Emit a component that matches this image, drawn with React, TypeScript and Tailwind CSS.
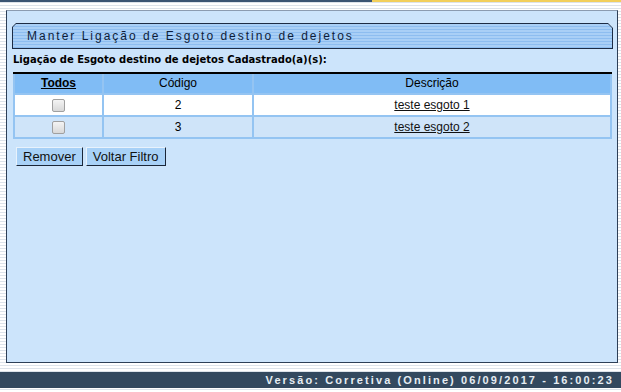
import React from "react";

const rows = [
  { code: "2", desc: "teste esgoto 1", bg: "bg-white" },
  { code: "3", desc: "teste esgoto 2", bg: "bg-[#cfe4f9]" },
];

export default function App() {
  return (
    <div className="w-[621px] h-[392px] flex flex-col bg-[repeating-linear-gradient(to_bottom,#ffffff_0px,#ffffff_2px,#dde3ea_2px,#dde3ea_3px)] overflow-hidden">
      <div className="flex h-[2px] shrink-0">
        <div className="w-[372px] bg-[#3b5573]" />
        <div className="flex-1 bg-[#f2cf5b]" />
      </div>
      <div className="mt-[8px] ml-[6px] mr-[3px] h-[353px] shrink-0 border border-[#2d3f57] border-t-[#8b9bb0] bg-[#cce4fb] pt-[12px] pl-[5px] pr-[4px]">
        {/* Title bar */}
        <div className="h-[26px] bg-[#1d2c44] [clip-path:polygon(4px_0,calc(100%-5px)_0,100%_5px,100%_100%,0_100%,0_4px)] p-[1px]">
          <div className="h-full bg-[repeating-linear-gradient(to_bottom,#a9cff6_0px,#a9cff6_2px,#8dbdf0_2px,#8dbdf0_3px)] [clip-path:polygon(3px_0,calc(100%-4px)_0,100%_4px,100%_100%,0_100%,0_3px)] flex items-center pl-[14px]">
            <span className="text-[12px] tracking-[2px] text-[#0e1d3a] font-['Liberation_Sans',Arial,sans-serif] leading-none">
              Manter Ligação de Esgoto destino de dejetos
            </span>
          </div>
        </div>
        <div className="mt-[4px] text-[10px] font-bold text-[#000] font-['DejaVu_Sans',Verdana,sans-serif] leading-[14px] pl-[1px]">
          Ligação de Esgoto destino de dejetos Cadastrado(a)(s):
        </div>
        <div className="mt-[5px] ml-[1px] mr-[1px] border-t-2 border-black">
          <table className="w-full border-collapse font-['Liberation_Sans',Arial,sans-serif] text-[12px] text-black">
            <thead>
              <tr className="bg-[#80bcf5]">
                <th className="w-[89px] p-0 font-bold border-x-2 border-[#94c4f2] leading-[19px]">
                  <span className="underline">Todos</span>
                </th>
                <th className="w-[150px] p-0 font-normal border-x-2 border-[#94c4f2] leading-[19px]">Código</th>
                <th className="p-0 font-normal border-x-2 border-[#94c4f2] leading-[19px]">Descrição</th>
              </tr>
            </thead>
            <tbody>
              {rows.map((r) => (
                <tr key={r.code} className={`${r.bg} h-[22px]`}>
                  <td className="p-0 border-2 border-[#94c4f2] text-center align-middle leading-[18px]">
                    <span className="inline-block w-[13px] h-[13px] rounded-[2px] border border-[#a0a0a0] bg-[linear-gradient(to_bottom,#f4f4f4,#d8d8d8)] align-middle" />
                  </td>
                  <td className="p-0 border-2 border-[#94c4f2] text-center leading-[18px]">{r.code}</td>
                  <td className="p-0 border-2 border-[#94c4f2] text-center leading-[18px]">
                    <span className="underline text-[#111]">{r.desc}</span>
                  </td>
                </tr>
              ))}
            </tbody>
          </table>
        </div>
        <div className="mt-[8px] ml-[4px] flex gap-[3px] font-['Liberation_Sans',Arial,sans-serif] text-[13px] text-[#111]">
          <button className="h-[19px] px-[6px] leading-[16px] bg-[#a8d1f7] border border-[#e8f2fc] border-r-[#1a2638] border-b-[#1a2638]">Remover</button>
          <button className="h-[19px] px-[6px] leading-[16px] bg-[#a8d1f7] border border-[#e8f2fc] border-r-[#1a2638] border-b-[#1a2638]">Voltar Filtro</button>
        </div>
      </div>
      <div className="mt-[9px] h-[16px] shrink-0 bg-[#33495f] flex items-center justify-end pr-[7px]">
        <span className="text-[11px] font-bold tracking-[2.1px] text-[#e6edf3] font-['Liberation_Sans',Arial,sans-serif] leading-none">
          Versão: Corretiva (Online) 06/09/2017 - 16:00:23
        </span>
      </div>
    </div>
  );
}
